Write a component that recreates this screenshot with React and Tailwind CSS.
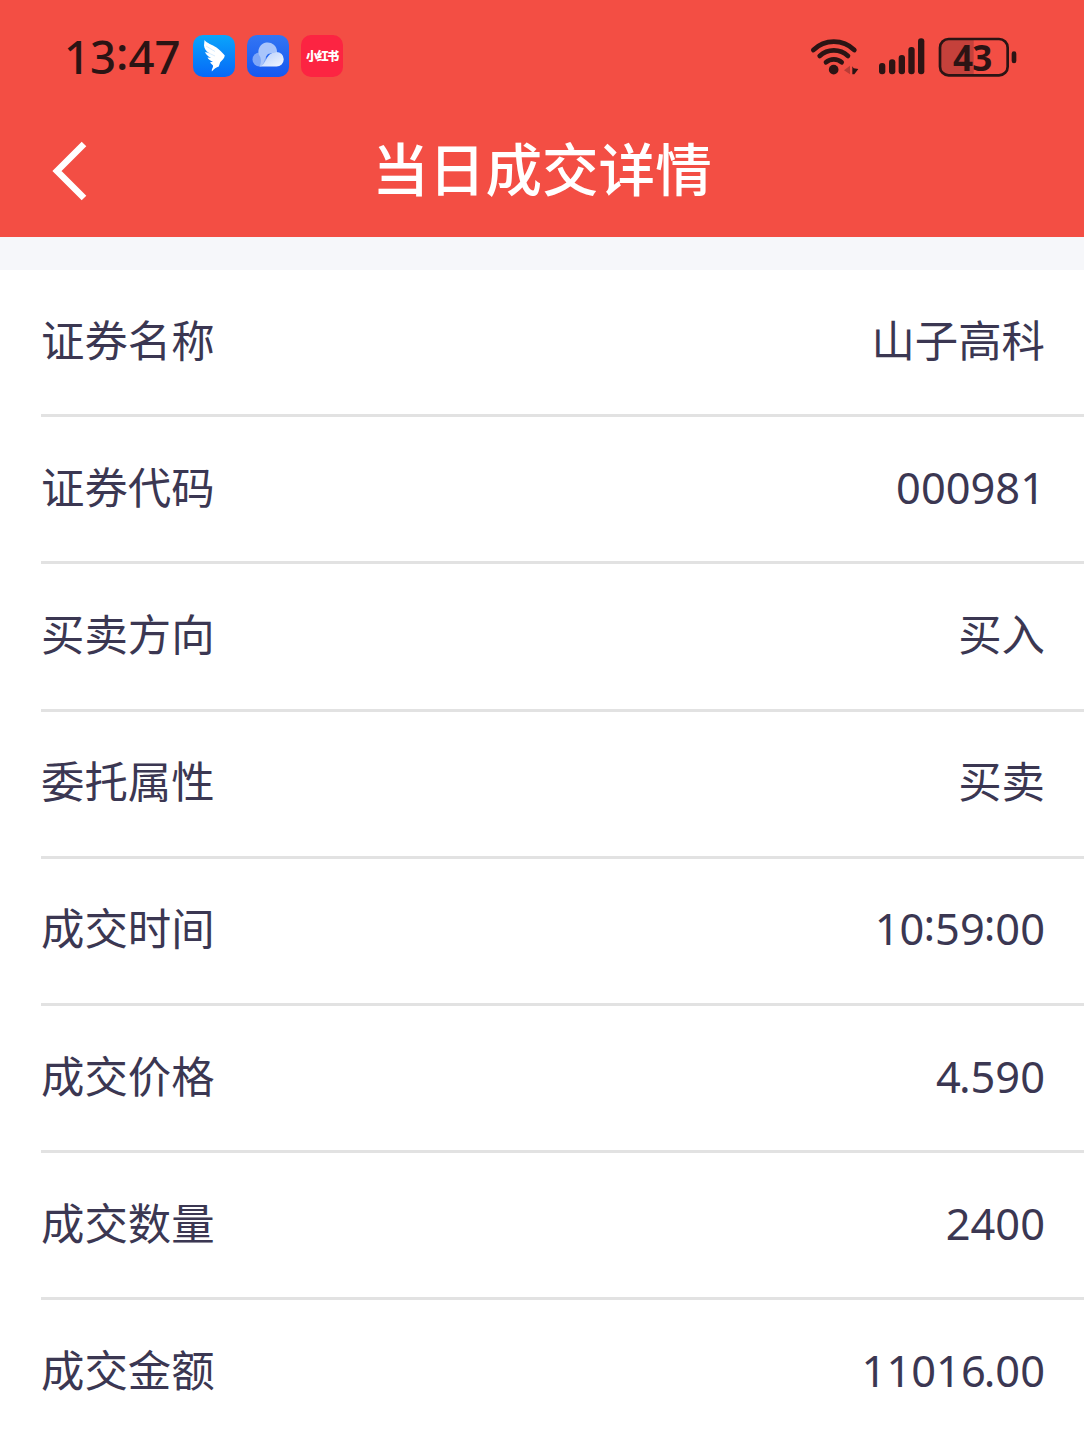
const rows = [
  { label: '证券名称', value: '山子高科' },
  { label: '证券代码', value: '000981' },
  { label: '买卖方向', value: '买入' },
  { label: '委托属性', value: '买卖' },
  { label: '成交时间', value: '10:59:00' },
  { label: '成交价格', value: '4.590' },
  { label: '成交数量', value: '2400' },
  { label: '成交金额', value: '11016.00' },
]

function WingIcon() {
  return (
    <svg width="42" height="42" viewBox="0 0 42 42">
      <defs>
        <linearGradient id="wing" x1="0" y1="0" x2="0" y2="1">
          <stop offset="0" stopColor="#0aa5fb" />
          <stop offset="1" stopColor="#0668f8" />
        </linearGradient>
      </defs>
      <rect width="42" height="42" rx="10" fill="url(#wing)" />
      <path d="M11.5 5C14 8.500 19 9.500 23.500 12.500C27 15 29.500 18 31.800 20.500C31.500 23.500 29 25 27.200 27.300L25.800 31.500C23.500 32 21 34 18.800 36.500C18.300 34 20.500 32.500 20 30.500L17 27.500L20 26.500C17.500 26 15.500 24.500 14.500 22.500L18 22.800C15 21.500 12.800 19.500 12 17L16 18C13 16 11.300 13.500 11 10.500Z" fill="#fff" />
      <path d="M13 11L22 16.500M13.500 17L22 21" stroke="#9fd0fb" strokeWidth="0.400" />
    </svg>
  )
}

function CloudIcon() {
  return (
    <svg width="42" height="42" viewBox="0 0 42 42">
      <defs>
        <linearGradient id="sky" x1="0" y1="0" x2="0" y2="1">
          <stop offset="0" stopColor="#3375f3" />
          <stop offset="1" stopColor="#1558f0" />
        </linearGradient>
        <linearGradient id="cloud" x1="0" y1="0" x2="1" y2="1">
          <stop offset="0" stopColor="#b4cdfc" />
          <stop offset="1" stopColor="#f3f7ff" />
        </linearGradient>
      </defs>
      <rect width="42" height="42" rx="10" fill="url(#sky)" />
      <circle cx="12.500" cy="24.500" r="7" fill="#7ea6f8" />
      <path d="M12.500 31.500C18 31 16 24 21 19L30 17A9.300 9.300 0 1 0 12 20C14.500 23 14.500 28 12.500 31.500Z" fill="#a9c5fb" />
      <path d="M12.500 31.500C20 30 18 17.500 29.500 17A7.250 7.250 0 0 1 29.500 31.500Z" fill="url(#cloud)" />
    </svg>
  )
}

function WifiIcon() {
  return (
    <svg width="50" height="40" viewBox="60 50 150 120" fill="none">
      <g stroke="#2b1414" strokeWidth="14" strokeLinecap="round">
        <path d="M70 89A88 88 0 0 1 193 89" />
        <path d="M89 107A62 62 0 0 1 174 107" />
        <path d="M108 126A35 35 0 0 1 155 126" />
      </g>
      <circle cx="131" cy="148" r="14.500" fill="#2b1414" />
      <path d="M162 150L180 136V162Z" fill="#b83c36" />
      <path d="M187 138L191 144L205 146L193 162H187Z" fill="#2b1414" />
    </svg>
  )
}

function SignalIcon() {
  return (
    <svg width="48" height="40" viewBox="264 50 144 120" fill="#2b1414">
      <rect x="267" y="128" width="19" height="34" rx="9" />
      <rect x="297" y="117" width="19" height="45" rx="9" />
      <rect x="326" y="104" width="19" height="58" rx="9" />
      <rect x="355" y="80" width="19" height="82" rx="9" />
      <rect x="384" y="54" width="19" height="108" rx="9" />
    </svg>
  )
}

function Battery() {
  return (
    <div className="relative w-[80px] h-[40px]">
      <svg width="80" height="40" viewBox="445 50 240 120">
        <path d="M552 55H477A26 26 0 0 0 451 81V140A26 26 0 0 0 477 166H552Z" fill="#c5413b" />
        <rect x="451" y="56" width="203" height="109" rx="26" fill="none" stroke="#2b1414" strokeWidth="8" />
        <rect x="666" y="93" width="14" height="36" rx="7" fill="#2b1414" />
      </svg>
      <span className="absolute left-[15px] top-px h-[40px] leading-[40px] text-[35px] font-bold tracking-[-0.800px] text-[#2b1414]">43</span>
    </div>
  )
}

function StatusBar() {
  return (
    <div className="h-[112px] pl-[64px] pr-[66px] flex items-center justify-between">
      <div className="flex items-center">
        <span className="w-[129px] text-[45.500px] leading-[48px] font-medium text-[#2b1414]">
          13<span className="relative -top-[4px]">:</span>47
        </span>
        <div className="flex gap-3">
          <WingIcon />
          <CloudIcon />
          <div className="w-[42px] h-[42px] rounded-[10px] bg-[#fc2442] flex items-center justify-center text-white text-[12px] leading-none font-black tracking-[-1.3px]">
            <span className="mt-0.5">小红书</span>
          </div>
        </div>
      </div>
      <div className="flex items-center pt-px">
        <WifiIcon />
        <div className="ml-[18px]"><SignalIcon /></div>
        <div className="ml-[12px]"><Battery /></div>
      </div>
    </div>
  )
}

function Value({ text }) {
  // colons sit at the middle of the digits
  return text.split(/([:.])/).map((part, i) => {
    if (part === ':') return <span key={i} className="relative -top-[4px] -ml-px">:</span>
    if (part === '.') return <span key={i} className="-ml-0.5">.</span>
    return part
  })
}

export default function App() {
  return (
    <div className="w-full h-[1442px] overflow-hidden bg-white font-['Noto_Sans','Noto_Sans_CJK_SC',sans-serif]">
      <header className="h-[237px] bg-[#f34e44]">
        <StatusBar />
        <div className="h-[118px] px-[50px] grid grid-cols-[40px_1fr_40px] items-center">
          <svg width="40" height="60" viewBox="0 0 40 60" fill="none" stroke="#fff" strokeWidth="6.500">
            <path d="M34 3L7 30L34 57" />
          </svg>
          <h1 className="pb-1 text-center text-[56.6px] leading-[60px] font-medium text-white">当日成交详情</h1>
        </div>
      </header>
      <div className="h-[33px] bg-[#f6f7fa]" />

      <div className="pl-[41px]">
        {rows.map(row => (
          <div
            key={row.label}
            className="h-[147.200px] pr-[39px] pb-[3px] flex items-center justify-between border-b-3 border-[#e2e2e2] text-[43.400px] leading-[60px] text-[#3b3752]"
          >
            <span>{row.label}</span>
            <span><Value text={row.value} /></span>
          </div>
        ))}
      </div>
    </div>
  )
}
